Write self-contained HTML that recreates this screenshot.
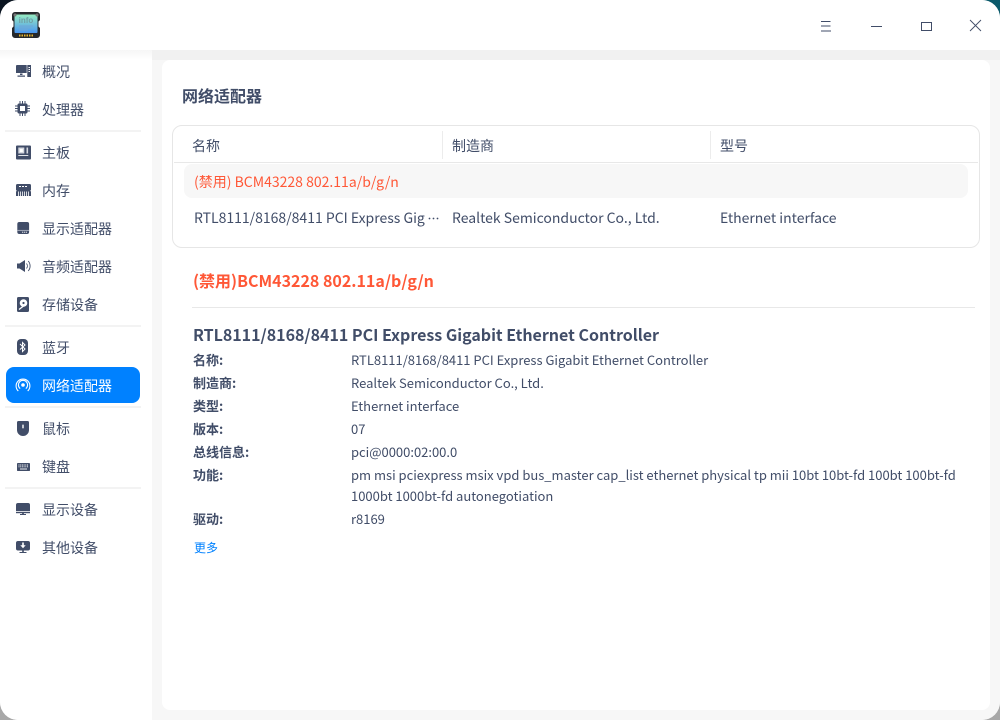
<!DOCTYPE html>
<html lang="zh-CN"><head><meta charset="utf-8"><style>
*{box-sizing:border-box;margin:0;padding:0}
html,body{width:1000px;height:720px;overflow:hidden;background:#fff}
body{position:relative;font-family:"Noto Sans CJK SC","Liberation Sans",sans-serif;color:#414d68;font-size:14px}
.c{position:absolute;width:24px;height:24px}
#w{position:absolute;inset:0;background:#f7f7f7;border-radius:18px;overflow:hidden}
.t{position:absolute;white-space:nowrap;line-height:20px}
.nav{position:absolute;left:42px;line-height:20px;font-size:14px;white-space:nowrap;color:#414d68}
.sep{position:absolute;left:5px;width:136px;height:2px;background:#f3f3f3}
svg.i{position:absolute;left:15px;width:18px;height:18px}
.k{position:absolute;left:193px;font-size:13px;font-weight:700;line-height:20px;color:#414d68;white-space:nowrap}
.v{position:absolute;left:351px;font-size:13px;line-height:20px;color:#414d68;white-space:nowrap;letter-spacing:-.01px}
</style></head><body>
<div class="c" style="left:0;top:0;background:#0a1420"></div>
<div class="c" style="right:0;top:0;background:#0b5a6b"></div>
<div class="c" style="left:0;bottom:0;background:#a8a8a8"></div>
<div class="c" style="right:0;bottom:0;background:#a8a8a8"></div>
<div id="w">
<div style="position:absolute;left:0;top:0;width:1000px;height:50px;background:#fff"></div>
<div style="position:absolute;left:152px;top:50px;width:848px;height:670px;background:#f7f7f7"></div>
<div style="position:absolute;left:0;top:50px;width:152px;height:670px;background:#fff"></div>
<div style="position:absolute;left:0;top:50px;width:152px;height:10px;background:linear-gradient(#f6f6f6,#fff)"></div>
<div style="position:absolute;left:152px;top:50px;width:848px;height:10px;background:#f1f1f1"></div>
<div style="position:absolute;left:162px;top:60px;width:828px;height:650px;background:#fff;border-radius:8px"></div>

<svg style="position:absolute;left:12px;top:12px" width="28" height="26" viewBox="0 0 28 26">
<defs><linearGradient id="g" x1="0" y1="0" x2="0" y2="1"><stop offset="0" stop-color="#96ecc2"/><stop offset="1" stop-color="#4b97f0"/></linearGradient></defs>
<path d="M3 0h22a3 3 0 0 1 3 3v5l-1.500 1.500v5L28 16v7a3 3 0 0 1-3 3H3a3 3 0 0 1-3-3v-7l1.500-1.500v-5L0 8V3a3 3 0 0 1 3-3z" fill="#26282c"/>
<rect x="2.500" y="2.500" width="23" height="18.500" rx="1" fill="url(#g)"/>
<circle cx="3" cy="3" r="1.500" fill="#777"/><circle cx="25" cy="3" r="1.500" fill="#777"/>
<text x="14" y="11" font-size="8" font-weight="700" text-anchor="middle" fill="#6f9fa5" font-family="Liberation Sans">info</text>
<path d="M7 14h14M7 16h12M7 18h9" stroke="#6fa5d5" stroke-width="1"/>
<path d="M7 23.500h14" stroke="#e6b52c" stroke-width="2" stroke-dasharray="1.500 1"/>
</svg>

<svg style="position:absolute;left:820px;top:20px" width="12" height="12" viewBox="0 0 12 12"><path d="M1 1.500h9.500M1 6h9.500M1 11h10" stroke="#414d68" fill="none"/></svg>
<div style="position:absolute;left:871px;top:26px;width:11px;height:1px;background:#414d68"></div>
<div style="position:absolute;left:921px;top:22px;width:11px;height:9px;border:1px solid #414d68"></div>
<svg style="position:absolute;left:969px;top:19px" width="13" height="13" viewBox="0 0 13 13"><path d="M1 1l11 11M12 1L1 12" stroke="#414d68" stroke-width=".9" fill="none"/></svg>

<!-- sidebar -->
<div class="sep" style="top:130px"></div><div class="sep" style="top:325px"></div><div class="sep" style="top:406px"></div><div class="sep" style="top:487px"></div>
<div style="position:absolute;left:6px;top:367px;width:134px;height:36px;background:#0081ff;border-radius:8px"></div>

<svg class="i" style="top:63px" viewBox="0 0 18 18" fill="#414d68"><path d="M2 2h9.700v8H1V3a1 1 0 0 1 1-1z"/><path d="M5 10.500h2.500V12H5zM2.500 12.500h7.500v1.200H2.500z"/><path d="M12.300 2H16v12h-3.700z"/><path d="M13.500 4h1.500v1h-1.500zM13.500 6h1.500v1h-1.500zM13.500 8h1.500v1h-1.500z" fill="#fff"/></svg>
<div class="nav" style="top:62px">概况</div>
<svg class="i" style="top:101px" viewBox="0 0 18 18"><rect x="2.500" y="2.500" width="10" height="10" rx="1.500" fill="#414d68"/><rect x="5" y="5" width="5" height="5" fill="#fff"/><path d="M0 5h2.500M0 7.500h2.500M0 10h2.500M12.500 5H15M12.500 7.500H15M12.500 10H15M5 0v2.500M7.500 0v2.500M10 0v2.500M5 12.500V15M7.500 12.500V15M10 12.500V15" stroke="#414d68"/></svg>
<div class="nav" style="top:100px">处理器</div>
<svg class="i" style="top:144px" viewBox="0 0 18 18"><rect x="1" y="1.500" width="15" height="14" rx="1" fill="#414d68"/><rect x="3.300" y="3.500" width="6" height="6" fill="#d5d8df"/><rect x="4.800" y="5" width="3" height="3" fill="#fff"/><rect x="11.500" y="3.500" width="1.600" height="6" fill="#d5d8df"/><rect x="3.300" y="11" width="10" height="1" fill="#e2e4e9"/></svg>
<div class="nav" style="top:143px">主板</div>
<svg class="i" style="top:182px" viewBox="0 0 18 18"><path d="M2.500 2h12a1.500 1.500 0 0 1 1.500 1.500V8l-.8.800.8.800V14H1V9.600l.8-.8L1 8V3.500A1.500 1.500 0 0 1 2.500 2z" fill="#414d68"/><path d="M4 4.500h9" stroke="#fff" stroke-dasharray="2 1" fill="none"/><path d="M3.500 9.500V14M5.500 9.500V14M7.500 9.500V14M9.500 9.500V14M11.500 9.500V14M13.500 9.500V14" stroke="#fff" stroke-width=".8" fill="none"/></svg>
<div class="nav" style="top:181px">内存</div>
<svg class="i" style="top:220px" viewBox="0 0 18 18"><rect x="2.300" y="2" width="11.800" height="12" rx="2" fill="#414d68"/><path d="M2.300 10.300h11.800" stroke="#c9cdd6" stroke-width=".7"/><path d="M7 12.200h5" stroke="#fff" stroke-width=".8" stroke-dasharray="1.200 .7"/></svg>
<div class="nav" style="top:219px">显示适配器</div>
<svg class="i" style="top:258px" viewBox="0 0 18 18"><path d="M2 5.500h2.500L10 2v12L4.500 10.500H2z" fill="#414d68"/><path d="M11.500 5.500a4 4 0 0 1 0 5M13.200 3a7.500 7.500 0 0 1 0 10" stroke="#414d68" stroke-width=".9" fill="none"/></svg>
<div class="nav" style="top:257px">音频适配器</div>
<svg class="i" style="top:296px" viewBox="0 0 18 18"><rect x="2" y="1" width="12" height="15" rx="1.500" fill="#414d68"/><circle cx="8.500" cy="7" r="3.800" fill="#fff"/><circle cx="8.500" cy="7" r="1.100" fill="#414d68"/><path d="M4 13.500l4.500-3.500" stroke="#fff" stroke-width="1.300"/></svg>
<div class="nav" style="top:295px">存储设备</div>
<svg class="i" style="top:338px" viewBox="0 0 18 18"><rect x="2" y="1" width="11" height="16" rx="4" fill="#414d68"/><path d="M5 6l5 5-2.500 2.500v-9L10 7 5 11.500" stroke="#fff" fill="none"/></svg>
<div class="nav" style="top:338px">蓝牙</div>
<svg class="i" style="top:376px" viewBox="0 0 18 18" fill="none" stroke="#fff"><circle cx="8" cy="9" r="1.800" fill="#fff" stroke="none"/><path d="M5.200 12.600a4.600 4.600 0 1 1 5.600 0M3.300 15a6.900 6.900 0 1 1 9.400 0" stroke-width="1.100"/></svg>
<div class="nav" style="top:376px;color:#fff">网络适配器</div>
<svg class="i" style="top:420px" viewBox="0 0 18 18"><path d="M3.500 1h9A1.500 1.500 0 0 1 14 2.500V10a6 6 0 0 1-12 0V2.500A1.500 1.500 0 0 1 3.500 1z" fill="#414d68"/><rect x="7.300" y="4.500" width="1.400" height="4" rx=".7" fill="#fff"/></svg>
<div class="nav" style="top:419px">鼠标</div>
<svg class="i" style="top:458px" viewBox="0 0 18 18"><rect x="2" y="5" width="13" height="8" rx=".8" fill="#414d68"/><path d="M3.500 7h10M3.500 8.800h10" stroke="#fff" stroke-width=".9" stroke-dasharray="1 .7"/><path d="M5 11h7" stroke="#fff" stroke-width=".9"/></svg>
<div class="nav" style="top:457px">键盘</div>
<svg class="i" style="top:501px" viewBox="0 0 18 18"><path d="M3 2h10a2 2 0 0 1 2 2v6H1V4a2 2 0 0 1 2-2z" fill="#414d68"/><rect x="1" y="10.800" width="14" height="1.400" fill="#414d68"/><rect x="7" y="12.200" width="2" height="1" fill="#414d68"/><rect x="5" y="13" width="6" height="1" fill="#414d68"/></svg>
<div class="nav" style="top:500px">显示设备</div>
<svg class="i" style="top:539px" viewBox="0 0 18 18"><rect x="1" y="2" width="14" height="9.500" rx="2" fill="#414d68"/><path d="M8 3.500v3" stroke="#fff" stroke-width="1.600"/><path d="M5.300 6.300h5.400L8 9.300z" fill="#fff"/><rect x="7.200" y="11.500" width="1.600" height="1.500" fill="#414d68"/><rect x="4.500" y="13" width="7" height="1" fill="#414d68"/></svg>
<div class="nav" style="top:538px">其他设备</div>

<!-- main -->
<div class="t" style="left:182px;top:85px;font-size:16px;font-weight:700">网络适配器</div>
<div style="position:absolute;left:172px;top:125px;width:808px;height:123px;border:1px solid #e6e6e6;border-radius:10px;background:#fff"></div>
<div style="position:absolute;left:174px;top:162px;width:804px;height:1px;background:#e8e8e8"></div>
<div style="position:absolute;left:442px;top:131px;width:1px;height:28px;background:#ececec"></div>
<div style="position:absolute;left:710px;top:131px;width:1px;height:28px;background:#ececec"></div>
<div style="position:absolute;left:184px;top:164px;width:784px;height:34px;background:#f7f7f7;border-radius:8px"></div>
<div class="t" style="left:192px;top:136px">名称</div>
<div class="t" style="left:452px;top:136px">制造商</div>
<div class="t" style="left:720px;top:136px">型号</div>
<div class="t" style="left:194px;top:172px;color:#ff5736">(禁用) BCM43228 802.11a/b/g/n</div>
<div class="t" style="left:194px;top:208px;letter-spacing:-.01px">RTL8111/8168/8411 PCI Express Gig</div>
<svg style="position:absolute;left:427px;top:216px" width="13" height="5" viewBox="0 0 13 5" fill="#414d68"><circle cx="2.500" cy="2.500" r=".9"/><circle cx="6.500" cy="2.500" r=".9"/><circle cx="10.500" cy="2.500" r=".9"/></svg>
<div class="t" style="left:452px;top:208px;letter-spacing:-.01px">Realtek Semiconductor Co., Ltd.</div>
<div class="t" style="left:720px;top:208px;letter-spacing:-.01px">Ethernet interface</div>
<div class="t" style="left:193px;top:270px;font-size:16px;font-weight:700;color:#ff5736">(禁用)BCM43228 802.11a/b/g/n</div>
<div style="position:absolute;left:192px;top:307px;width:783px;height:1px;background:#e8e8e8"></div>
<div class="t" style="left:193px;top:324px;font-size:16px;font-weight:700;letter-spacing:-.012px">RTL8111/8168/8411 PCI Express Gigabit Ethernet Controller</div>
<div class="k" style="top:350px">名称:</div><div class="v" style="top:350px">RTL8111/8168/8411 PCI Express Gigabit Ethernet Controller</div>
<div class="k" style="top:373px">制造商:</div><div class="v" style="top:373px">Realtek Semiconductor Co., Ltd.</div>
<div class="k" style="top:396px">类型:</div><div class="v" style="top:396px">Ethernet interface</div>
<div class="k" style="top:419px">版本:</div><div class="v" style="top:419px">07</div>
<div class="k" style="top:442px">总线信息:</div><div class="v" style="top:442px">pci@0000:02:00.0</div>
<div class="k" style="top:465px">功能:</div><div class="v" style="top:465px">pm msi pciexpress msix vpd bus_master cap_list ethernet physical tp mii 10bt 10bt-fd 100bt 100bt-fd</div>
<div class="v" style="top:486px">1000bt 1000bt-fd autonegotiation</div>
<div class="k" style="top:509px">驱动:</div><div class="v" style="top:509px">r8169</div>
<div class="t" style="left:194px;top:538px;font-size:12px;color:#0081ff">更多</div>
</div>
</body></html>
